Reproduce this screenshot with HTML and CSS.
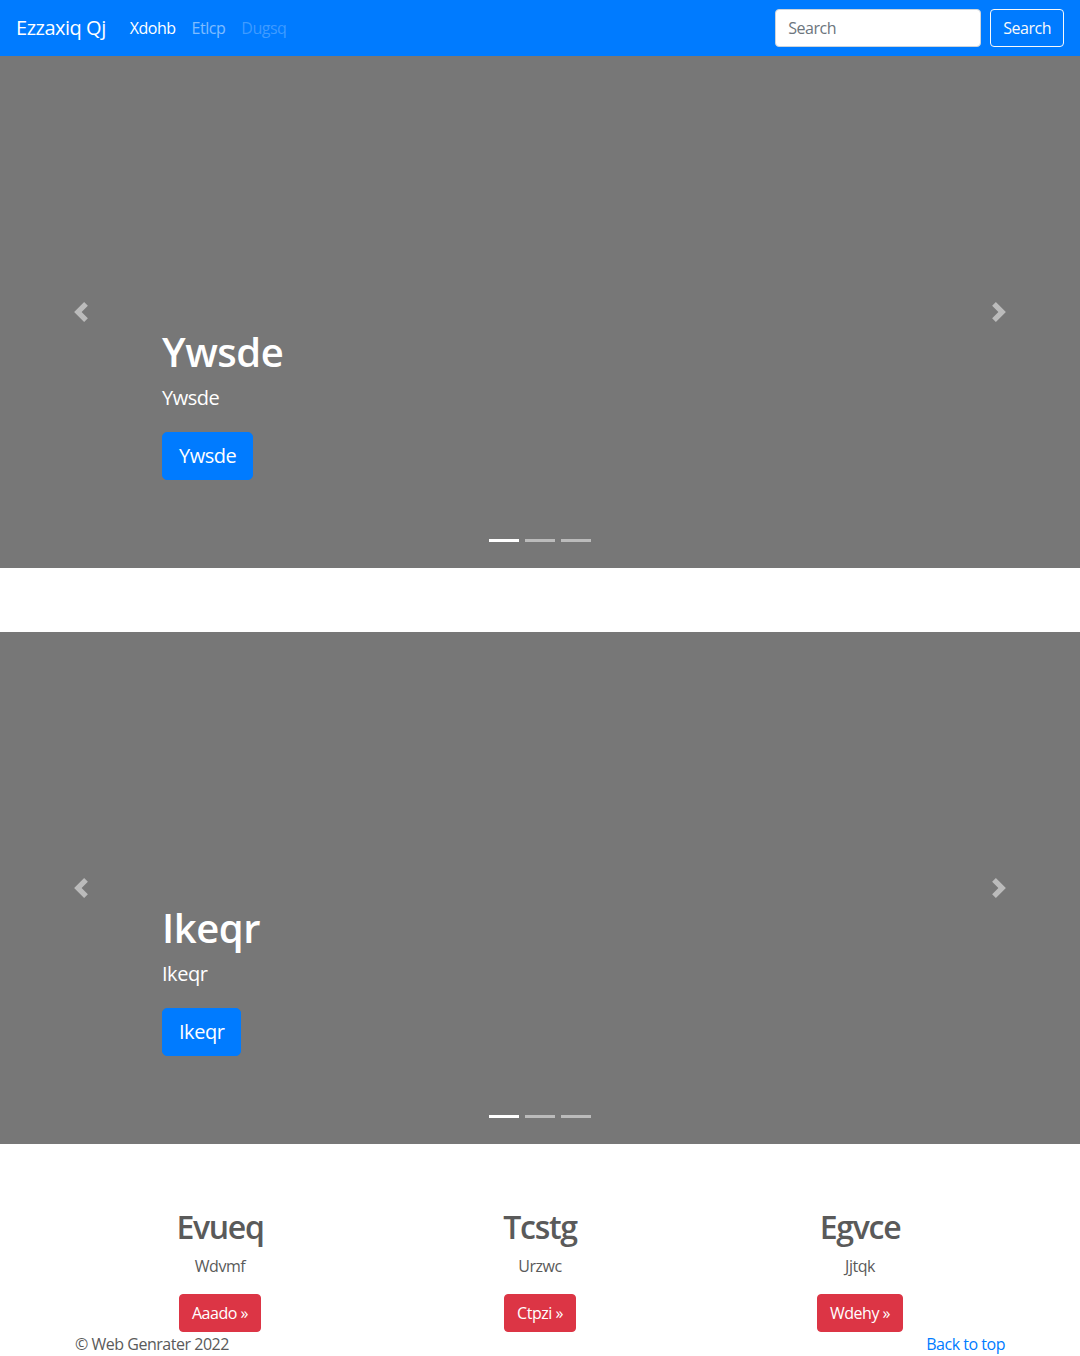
FILE: index.html
```html
<!DOCTYPE html>
<html lang="en">
<head>
<meta charset="utf-8">
<title>Ezzaxiq Qj</title>
<link rel="stylesheet" href="styles.css">
</head>
<body>
<header class="navbar">
  <a class="brand" href="#">Ezzaxiq Qj</a>
  <nav class="nav">
    <a class="nav-link active" href="#">Xdohb</a>
    <a class="nav-link" href="#">Etlcp</a>
    <a class="nav-link disabled" href="#">Dugsq</a>
  </nav>
  <form class="search">
    <input class="search-input" type="text" placeholder="Search">
    <button class="btn-outline" type="button">Search</button>
  </form>
</header>

<main>
  <section class="carousel">
    <a class="control control-prev" href="#"><svg width="20" height="20" viewBox="0 0 8 8" fill="#fff"><path d="M5.25 0l-4 4 4 4 1.5-1.5L4.25 4l2.5-2.5L5.25 0z"/></svg></a>
    <div class="caption">
      <h1 class="caption-title">Ywsde</h1>
      <p class="caption-text">Ywsde</p>
      <p class="caption-action"><a class="btn-primary" href="#">Ywsde</a></p>
    </div>
    <a class="control control-next" href="#"><svg width="20" height="20" viewBox="0 0 8 8" fill="#fff"><path d="M2.75 0l-1.5 1.5L3.75 4l-2.5 2.5L2.75 8l4-4-4-4z"/></svg></a>
    <ol class="indicators">
      <li class="indicator active"></li>
      <li class="indicator"></li>
      <li class="indicator"></li>
    </ol>
  </section>

  <section class="carousel">
    <a class="control control-prev" href="#"><svg width="20" height="20" viewBox="0 0 8 8" fill="#fff"><path d="M5.25 0l-4 4 4 4 1.5-1.5L4.25 4l2.5-2.5L5.25 0z"/></svg></a>
    <div class="caption">
      <h1 class="caption-title">Ikeqr</h1>
      <p class="caption-text">Ikeqr</p>
      <p class="caption-action"><a class="btn-primary" href="#">Ikeqr</a></p>
    </div>
    <a class="control control-next" href="#"><svg width="20" height="20" viewBox="0 0 8 8" fill="#fff"><path d="M2.75 0l-1.5 1.5L3.75 4l-2.5 2.5L2.75 8l4-4-4-4z"/></svg></a>
    <ol class="indicators">
      <li class="indicator active"></li>
      <li class="indicator"></li>
      <li class="indicator"></li>
    </ol>
  </section>

  <section class="marketing">
    <div class="feature">
      <h2 class="feature-title">Evueq</h2>
      <p class="feature-text">Wdvmf</p>
      <a class="btn-danger" href="#">Aaado &raquo;</a>
    </div>
    <div class="feature">
      <h2 class="feature-title">Tcstg</h2>
      <p class="feature-text">Urzwc</p>
      <a class="btn-danger" href="#">Ctpzi &raquo;</a>
    </div>
    <div class="feature">
      <h2 class="feature-title">Egvce</h2>
      <p class="feature-text">Jjtqk</p>
      <a class="btn-danger" href="#">Wdehy &raquo;</a>
    </div>
  </section>

  <footer class="footer">
    <p class="copy">&copy; Web Genrater 2022</p>
    <p class="top-link"><a href="#">Back to top</a></p>
  </footer>
</main>
</body>
</html>
```

FILE: styles.css
```css
html, body {
  overflow: hidden;
}
body {
  margin: 0;
  font-family: "Open Sans", "Noto Sans", sans-serif;
  font-size: 16px;
  line-height: 1.5;
  letter-spacing: -0.03em;
  color: #5a5a5a;
  background: #fff;
}
a {
  text-decoration: none;
}

/* navbar */
.navbar {
  height: 56px;
  box-sizing: border-box;
  padding: 8px 16px;
  background: #007bff;
  display: flex;
  align-items: center;
}
.brand {
  font-size: 20px;
  line-height: 30px;
  padding: 5px 0;
  margin-right: 16px;
  color: #fff;
}
.nav {
  display: flex;
}
.nav-link {
  padding: 8px;
  color: rgba(255, 255, 255, 0.5);
  line-height: 24px;
}
.nav-link.active {
  color: #fff;
}
.nav-link.disabled {
  color: rgba(255, 255, 255, 0.25);
}
.search {
  margin-left: auto;
  display: flex;
  align-items: center;
}
.search-input {
  width: 206px;
  height: 38px;
  box-sizing: border-box;
  padding: 6px 12px;
  margin: 0 9px 0 0;
  border: 1px solid #ced4da;
  border-radius: 4px;
  font-family: inherit;
  font-size: 16px;
  letter-spacing: inherit;
  color: #495057;
  background: #fff;
}
.search-input::placeholder {
  color: #6c757d;
}
.btn-outline {
  height: 38px;
  box-sizing: border-box;
  padding: 6px 12px;
  border: 1px solid #f8f9fa;
  border-radius: 4px;
  background: transparent;
  color: #f8f9fa;
  font-family: inherit;
  font-size: 16px;
  letter-spacing: inherit;
  line-height: 24px;
}

/* carousel */
.carousel {
  position: relative;
  height: 512px;
  background: #777;
  margin-bottom: 64px;
}
.control {
  position: absolute;
  top: 0;
  bottom: 0;
  width: 15%;
  display: flex;
  align-items: center;
  justify-content: center;
  opacity: 0.5;
}
.control-prev {
  left: 0;
}
.control-next {
  right: 0;
}
.caption {
  position: absolute;
  left: 15%;
  right: 15%;
  bottom: 48px;
  padding: 20px 0;
  color: #fff;
  text-align: left;
  z-index: 10;
}
.caption-title {
  margin: 0 0 8px;
  font-size: 40px;
  font-weight: 600;
  line-height: 1.2;
}
.caption-text {
  margin: 0 0 20px;
  font-size: 20px;
  line-height: 1.4;
}
.caption-action {
  margin: 0 0 20px;
  height: 48px;
}
.btn-primary {
  display: inline-block;
  padding: 8px 16px;
  font-size: 20px;
  line-height: 30px;
  border: 1px solid #007bff;
  border-radius: 5px;
  background: #007bff;
  color: #fff;
}
.indicators {
  position: absolute;
  left: 0;
  right: 0;
  bottom: 0;
  margin: 0 0 16px;
  padding: 0;
  list-style: none;
  display: flex;
  justify-content: center;
}
.indicator {
  width: 30px;
  height: 3px;
  margin: 0 3px;
  border-top: 10px solid transparent;
  border-bottom: 10px solid transparent;
  background: #fff;
  background-clip: padding-box;
  opacity: 0.5;
}
.indicator.active {
  opacity: 1;
}

/* marketing */
.marketing {
  width: 960px;
  margin: 0 auto;
  display: grid;
  grid-template-columns: repeat(3, 1fr);
  text-align: center;
}
.feature {
  padding: 0 15px;
}
.feature-title {
  margin: 0 0 8px;
  font-size: 32px;
  font-weight: 600;
  letter-spacing: -0.04em;
  line-height: 1.2;
  color: #5a5a5a;
}
.feature-text {
  margin: 0 0 16px;
  color: #5a5a5a;
}
.btn-danger {
  display: inline-block;
  padding: 6px 12px;
  line-height: 24px;
  border: 1px solid #dc3545;
  border-radius: 4px;
  background: #dc3545;
  color: #fff;
}

/* footer */
.footer {
  width: 930px;
  margin: 0 auto;
  padding: 0 15px;
  display: flex;
  justify-content: space-between;
}
.footer p {
  margin: 0;
}
.top-link a {
  color: #007bff;
}
```
